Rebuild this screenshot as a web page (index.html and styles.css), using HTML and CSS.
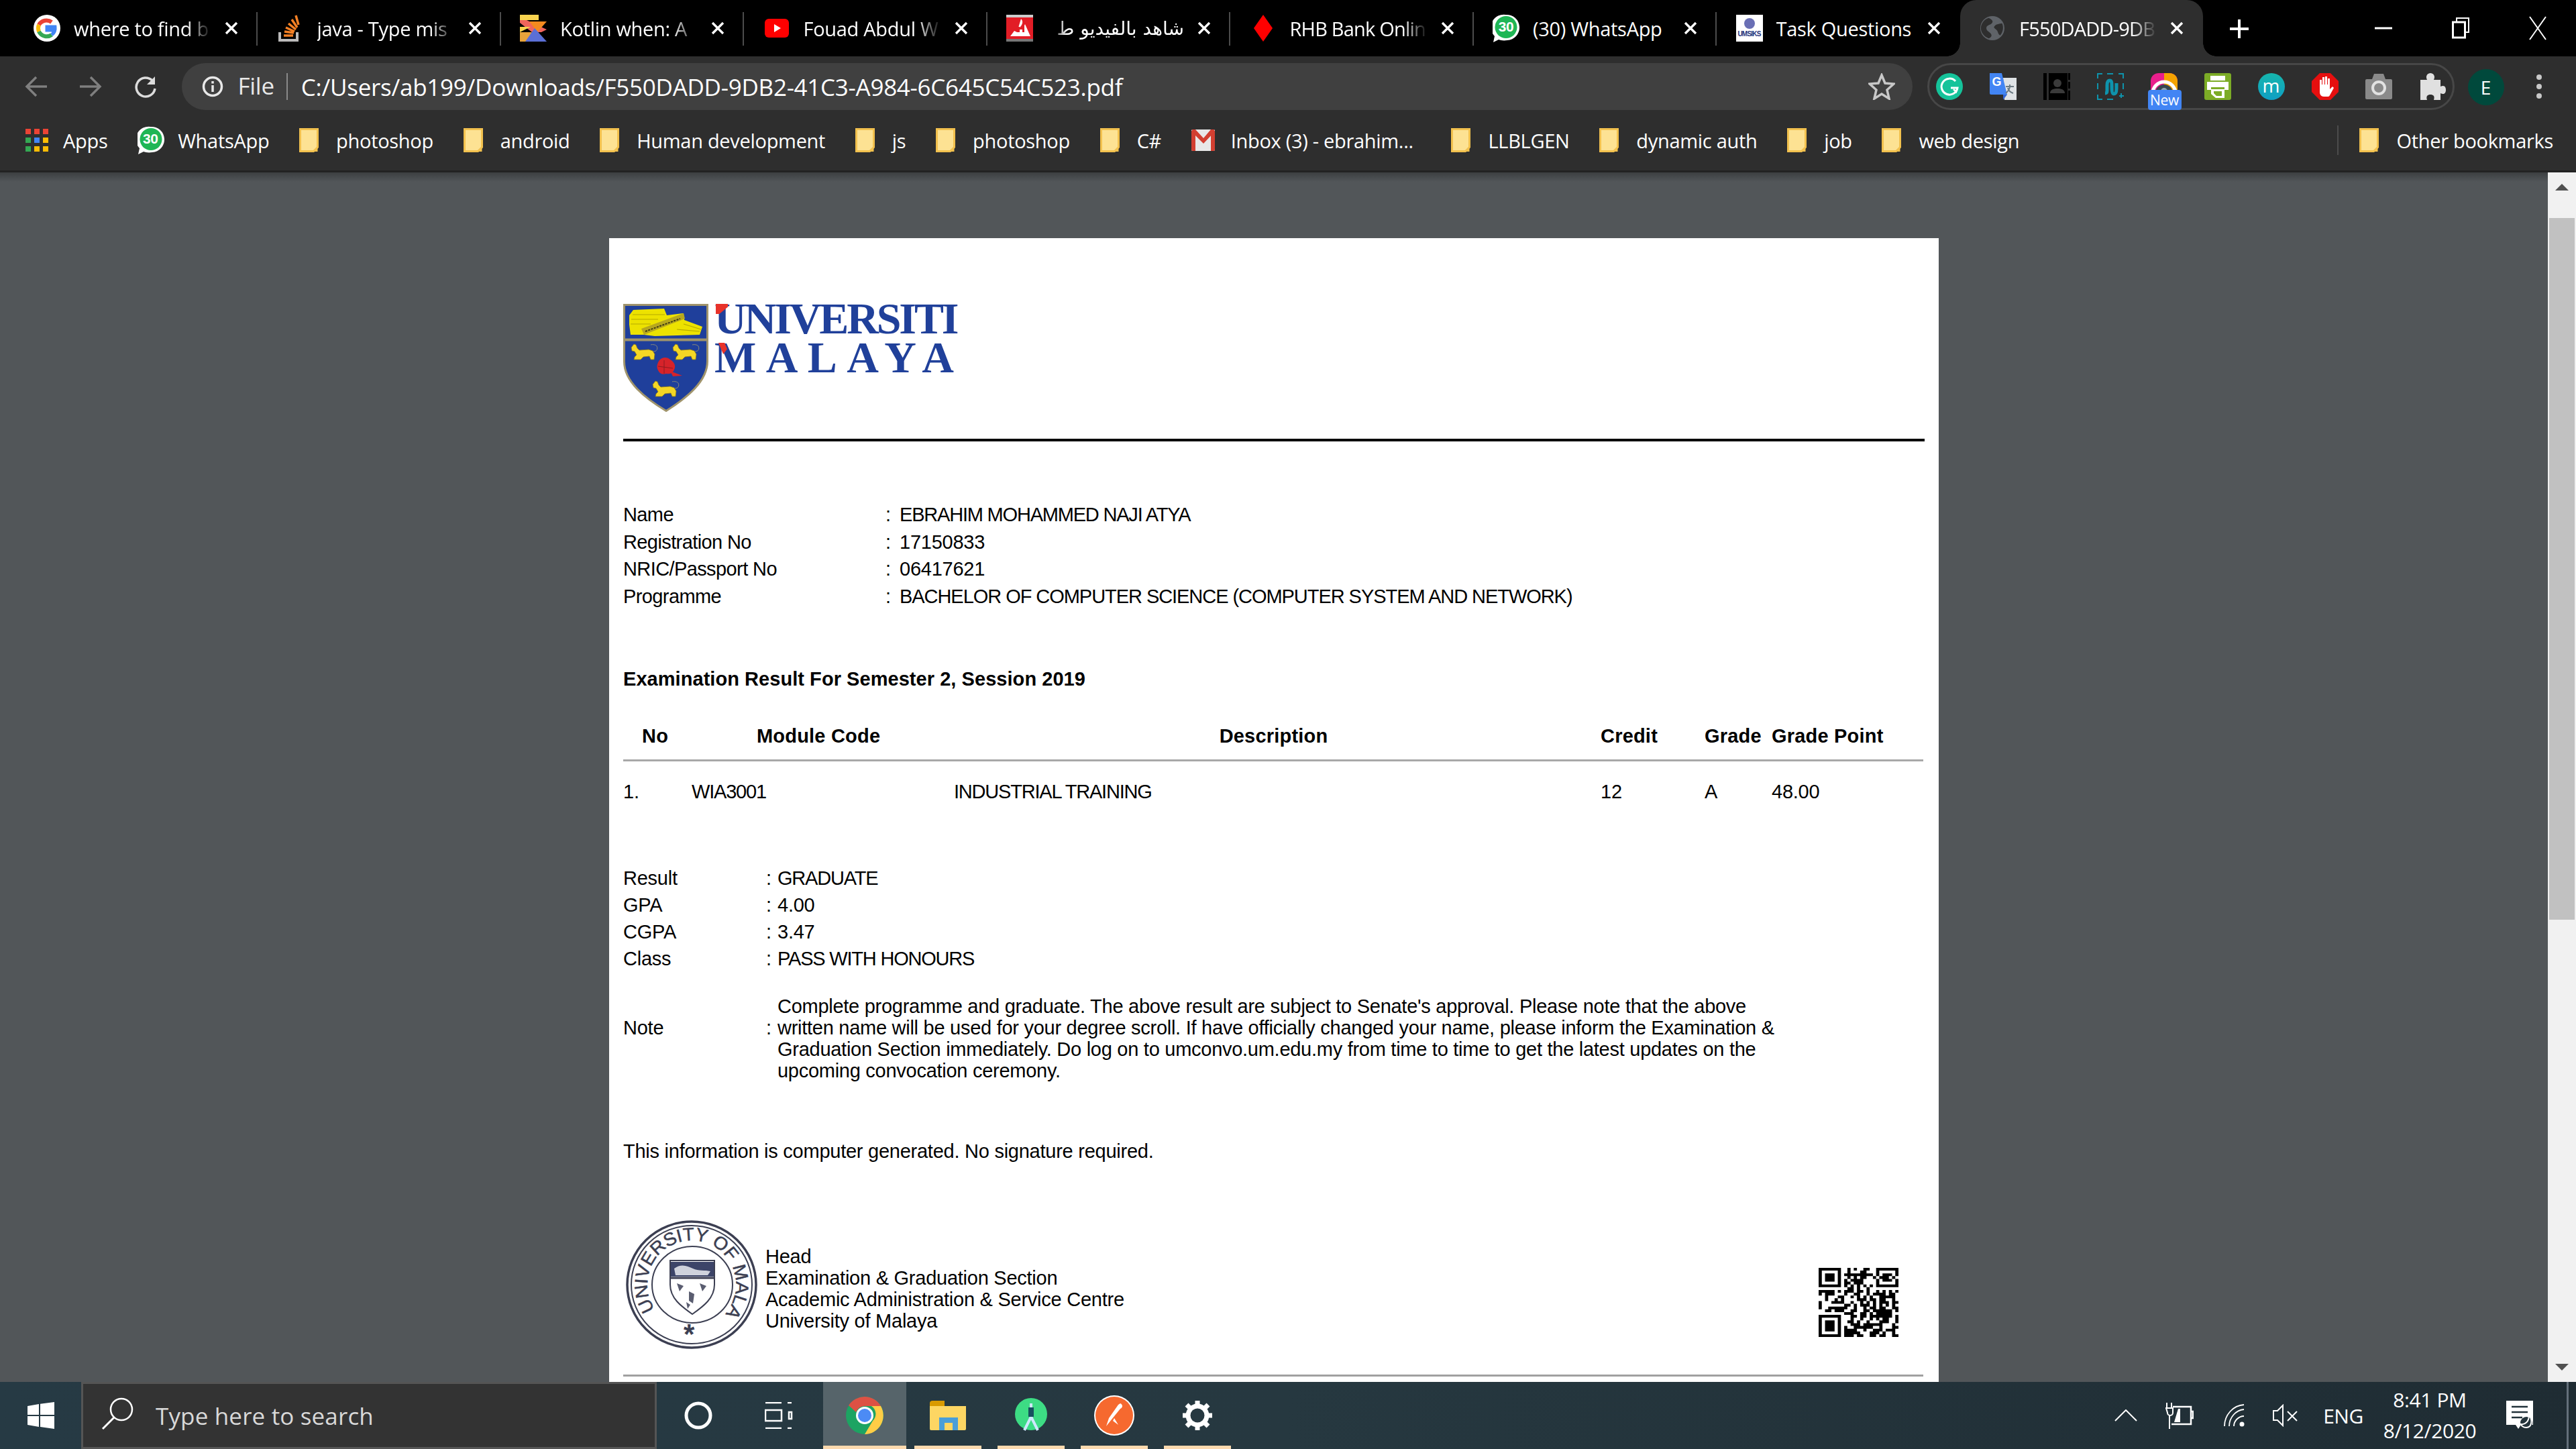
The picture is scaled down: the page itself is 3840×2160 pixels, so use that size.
FILE: index.html
```html
<!DOCTYPE html>
<html lang="en">
<head>
<meta charset="utf-8">
<title>F550DADD-9DB2-41C3-A984-6C645C54C523.pdf</title>
<link rel="stylesheet" href="styles.css">
</head>
<body>
<svg class="defs" width="0" height="0">
  <defs>
    <symbol id="x" viewBox="0 0 20 20"><path d="M2 2 18 18M18 2 2 18" stroke="#fff" stroke-width="3.4" fill="none"/></symbol>
    <symbol id="folder" viewBox="0 0 29 36"><path d="M1.5 1.500h26v27l-6 6h-20z" fill="#fde293" stroke="#f2c14e" stroke-width="3"/><path d="M27.500 27v8h-6z" fill="#f2c14e"/></symbol>
    <symbol id="wa" viewBox="0 0 40 44"><path d="M20 2a19 19 0 0 1 2 38c-6 1-10 0-13-1l-8 4 2-9A19 19 0 0 1 20 2z" fill="#fff"/><circle cx="20" cy="20.500" r="16.500" fill="#1fb655"/></symbol>
    <symbol id="tiger" viewBox="0 0 42 25"><path d="M1 6 5 1l3 1 2 5 3 3 14-1 6 2 3 5-1 8h-5l-2-5-9 1-4 4H5l1-4 3-3-3-5-4-1z" fill="#f4d625" stroke="#8a7a1c" stroke-width=".8"/><path d="M34 12c5 0 7-4 5-8-1-2-6-3-9-2" stroke="#8c8c7a" stroke-width="1" fill="none"/></symbol>
  </defs>
</svg>

<header class="tabstrip">
  <div class="tab sep">
    <svg class="favicon" viewBox="0 0 40 40"><circle cx="20" cy="20" r="20" fill="#fff"/><path d="M27 11a13 13 0 0 0-19 4" stroke="#ea4335" stroke-width="6" fill="none"/><path d="M8 15a13 13 0 0 0 0 10" stroke="#fbbc05" stroke-width="6" fill="none"/><path d="M8 25a13 13 0 0 0 19 5" stroke="#34a853" stroke-width="6" fill="none"/><path d="M27 30a13 13 0 0 0 5-12H20v5h7" stroke="#4285f4" stroke-width="5" fill="#4285f4"/></svg>
    <span class="tab-title">where to find b</span><svg class="close"><use href="#x"/></svg>
  </div>
  <div class="tab sep">
    <svg class="favicon" viewBox="0 0 40 40"><path d="M4 26v12h26V26" stroke="#bcbbbb" stroke-width="4" fill="none"/><path d="M10 31h14M11 25l14 2M13 19l13 6M17 13l11 9M22 7l8 12M28 1l4 14" stroke="#f48024" stroke-width="3.500" fill="none"/></svg>
    <span class="tab-title">java - Type mis</span><svg class="close"><use href="#x"/></svg>
  </div>
  <div class="tab sep">
    <svg class="favicon" viewBox="0 0 40 40"><path d="M0 0h28v8H0z" fill="#f8d34f"/><path d="M0 8h10l30 14-8 4H18L0 12z" fill="#f0655c"/><path d="M14 10h26L26 26z" fill="#f48a1f"/><path d="M0 18h16L0 26z" fill="#f8d34f"/><path d="M0 26h18l-8 14H0z" fill="#e8a33a"/><path d="M22 20l18 20H8z" fill="#5b6fd6"/></svg>
    <span class="tab-title">Kotlin when: A</span><svg class="close"><use href="#x"/></svg>
  </div>
  <div class="tab sep">
    <svg class="favicon" viewBox="0 0 40 40"><rect x="2" y="6" width="36" height="28" rx="6" fill="#f00"/><path d="M16 14l10 6-10 6z" fill="#fff"/></svg>
    <span class="tab-title">Fouad Abdul W</span><svg class="close"><use href="#x"/></svg>
  </div>
  <div class="tab sep">
    <svg class="favicon" viewBox="0 0 40 40"><rect width="40" height="40" fill="#e21d26"/><path d="M0 0h40v4H0z" fill="#ccc"/><path d="M0 36h40v4H0z" fill="#777"/><path d="M22 6c6 6-2 14-6 16h8l4-8 8 18H6l6-8 4 2z" fill="#fff"/><path d="M16 18h4v8h-4zM24 16h3v10h-3z" fill="#e21d26"/></svg>
    <span class="tab-title tab-rtl" dir="rtl" lang="ar">شاهد بالفيديو ط</span><svg class="close"><use href="#x"/></svg>
  </div>
  <div class="tab sep">
    <svg class="favicon" viewBox="0 0 40 40"><path d="M20 0l14 20-14 20L6 20z" fill="#f00"/></svg>
    <span class="tab-title tab-tight">RHB Bank Onlin</span><svg class="close"><use href="#x"/></svg>
  </div>
  <div class="tab sep">
    <span class="wa-badge"><svg class="wa-shape"><use href="#wa"/></svg><span class="wa-count">30</span></span>
    <span class="tab-title tab-solid">(30) WhatsApp</span><svg class="close"><use href="#x"/></svg>
  </div>
  <div class="tab">
    <span class="umsiks"><i class="umsiks-crest"></i>UMSIKS</span>
    <span class="tab-title tab-solid">Task Questions</span><svg class="close"><use href="#x"/></svg>
  </div>
  <div class="tab tab-active">
    <svg class="favicon globe" viewBox="0 0 40 40"><circle cx="20" cy="20" r="20" fill="#5f6368"/><path d="M14 3c6 3 8 6 5 9s-9 3-9 8 6 6 8 10-2 6-4 7c-8-3-13-10-13-17S6 5 14 3zM36 12c3 6 2 14-3 20-4-2-3-6-6-9s-6-4-3-7 8-3 12-4z" fill="#2e2e2e"/></svg>
    <span class="tab-title tab-tight">F550DADD-9DB</span><svg class="close"><use href="#x"/></svg>
  </div>
  <svg class="newtab" viewBox="0 0 30 30"><path d="M15 1v28M1 15h28" stroke="#fff" stroke-width="4"/></svg>
  <div class="winctl">
    <span class="wc"><svg width="26" height="4"><path d="M0 2h26" stroke="#fff" stroke-width="3"/></svg></span>
    <span class="wc"><svg width="26" height="32" viewBox="0 0 26 32"><path d="M7 6V1h18v21h-5" stroke="#fff" stroke-width="2" fill="none"/><path d="M1.500 7h18v23h-18z" stroke="#fff" stroke-width="3" fill="none"/></svg></span>
    <span class="wc"><svg width="26" height="36" viewBox="0 0 26 36"><path d="M1 1 25 35M25 1 1 35" stroke="#fff" stroke-width="2"/></svg></span>
  </div>
</header>

<nav class="toolbar">
  <span class="navbtn"><svg width="34" height="32" viewBox="0 0 34 32"><path d="M33 16H3M17 2 3 16l14 14" stroke="#7f7f7f" stroke-width="3.500" fill="none"/></svg></span>
  <span class="navbtn"><svg width="34" height="32" viewBox="0 0 34 32"><path d="M1 16h30M17 2l14 14-14 14" stroke="#7f7f7f" stroke-width="3.500" fill="none"/></svg></span>
  <span class="navbtn"><svg width="34" height="34" viewBox="0 0 34 34"><path d="M28 8a14 14 0 1 0 4 12" stroke="#dcdcdc" stroke-width="3.500" fill="none"/><path d="M32 2v12H20z" fill="#dcdcdc"/></svg></span>
  <div class="omnibox">
    <svg class="info" viewBox="0 0 32 32"><circle cx="16" cy="16" r="13.500" stroke="#e8e8e8" stroke-width="3.500" fill="none"/><path d="M16 14v10M16 8v3.500" stroke="#e8e8e8" stroke-width="3.500"/></svg>
    <span class="scheme">File</span>
    <span class="url">C:/Users/ab199/Downloads/F550DADD-9DB2-41C3-A984-6C645C54C523.pdf</span>
    <svg class="star" viewBox="0 0 40 40"><path d="M20 3l5 12 13 1-10 9 3 13-11-7-11 7 3-13L2 16l13-1z" stroke="#c8c8c8" stroke-width="3.500" fill="none"/></svg>
  </div>
  <div class="extensions">
    <svg class="ext" viewBox="0 0 40 40"><circle cx="20" cy="20" r="20" fill="#15c39a"/><path d="M29 12a12 12 0 1 0 3 10H22" stroke="#fff" stroke-width="3" fill="none"/><path d="M26 24l4 4 2-6" stroke="#fff" stroke-width="2.500" fill="none"/></svg>
    <span class="ext gtrans"><svg viewBox="0 0 40 40"><path d="M20 7h20v33H22z" fill="#dfe3e6"/><path d="M0 0h18l8 32H2a2 2 0 0 1-2-2z" fill="#4285f4"/><path d="M20 32h6l-6 8z" fill="#3367d6"/><path d="M24 20h12M30 17v3c0 5-4 8-6 10M27 22c1 4 5 7 8 8" stroke="#6d7b84" stroke-width="2" fill="none"/></svg><span class="gtrans-g">G</span></span>
    <svg class="ext" viewBox="0 0 40 40"><path d="M0 0h5v40H0zM8 0h28v40H8zM37 0h3v10h-3zM37 13h3v10h-3zM37 26h3v14h-3z" fill="#000"/><circle cx="21" cy="15" r="6" fill="#3a3a3a"/><path d="M10 30c0-6 6-7 11-7s11 1 11 7z" fill="#3a3a3a"/></svg>
    <svg class="ext" viewBox="0 0 40 40"><path d="M1 8V1h7M15 1h9M32 1h7v7M1 15v9M1 32v7h7M15 39h9M39 15v9M33 34h7M36 30v7" stroke="#0e93ac" stroke-width="2" fill="none"/><path d="M12 30c2 0 3-1 3-4v-8c0-4 1-7 4-7s3 4 3 8 0 12 3 12 4-4 4-8v-8" stroke="#0e93ac" stroke-width="5" fill="none"/></svg>
    <span class="ext camera"><svg viewBox="0 0 40 40"><path d="M0 40V12C0 4 6 0 12 0h16c7 0 12 5 12 12v28z" fill="#e91e8c"/><path d="M20 0h8c7 0 12 5 12 12v28H20z" fill="#f5a300"/><path d="M3 30a17 17 0 0 1 34 0" stroke="#fff" stroke-width="5" fill="none"/><path d="M7 30a13 13 0 0 1 26 0z" fill="#37474f"/><circle cx="20" cy="27" r="5" fill="#90a4ae"/></svg><span class="new-badge">New</span></span>
    <svg class="ext" viewBox="0 0 40 40"><rect width="40" height="40" rx="3" fill="#7cac26"/><path d="M9 4h22v7H9zM4 13h32v12h-6v-4H10v4H4zM10 24h20v13H17l-7-6z" fill="#fff"/><path d="M14 27h12v7H18l-4-4z" fill="#7cac26"/></svg>
    <span class="ext ext-m">m</span>
    <svg class="ext" viewBox="0 0 40 40"><path d="M12 0h16l12 12v16L28 40H12L0 28V12z" fill="#e60f0f"/><path d="M12 17v-7h3v7h1V6h3v11h1V5h3v12h1V8h3v16l4-4 2 2-6 11c-1 2-2 2-4 2h-5c-4 0-6-3-6-7z" fill="#fff"/></svg>
    <svg class="ext" viewBox="0 0 40 40"><path d="M2 9h8l3-8h14l3 8h8a2 2 0 0 1 2 2v26a2 2 0 0 1-2 2H2a2 2 0 0 1-2-2V11a2 2 0 0 1 2-2z" fill="#8a8a8a"/><circle cx="20" cy="22" r="9" fill="none" stroke="#e2e2e2" stroke-width="4"/></svg>
    <svg class="ext" viewBox="0 0 40 40"><path d="M2 10h10c-3-6 1-10 5-10s8 4 5 10h10v10c6-3 8 1 8 5s-2 8-8 5v10H22c2-6-1-8-5-8s-7 2-5 8H2z" fill="#e0e0e0"/></svg>
  </div>
  <span class="avatar">E</span>
  <svg class="menu-dots" viewBox="0 0 12 40"><circle cx="6" cy="6" r="4" fill="#c8c8c8"/><circle cx="6" cy="20" r="4" fill="#c8c8c8"/><circle cx="6" cy="34" r="4" fill="#c8c8c8"/></svg>
</nav>

<nav class="bookmarks">
  <span class="bm"><svg class="bm-apps" viewBox="0 0 34 34"><path d="M0 0h8v8H0z" fill="#ea4335"/><path d="M13 0h8v8h-8zM26 0h8v8h-8z" fill="#ea4335"/><path d="M0 13h8v8H0z" fill="#34a853"/><path d="M13 13h8v8h-8z" fill="#4285f4"/><path d="M26 13h8v8h-8z" fill="#fbbc05"/><path d="M0 26h8v8H0z" fill="#34a853"/><path d="M13 26h8v8h-8zM26 26h8v8h-8z" fill="#fbbc05"/></svg>Apps</span>
  <span class="bm bm-wa"><span class="wa-badge"><svg class="wa-shape"><use href="#wa"/></svg><span class="wa-count">30</span></span>WhatsApp</span>
  <span class="bm"><svg class="folder"><use href="#folder"/></svg>photoshop</span>
  <span class="bm"><svg class="folder"><use href="#folder"/></svg>android</span>
  <span class="bm"><svg class="folder"><use href="#folder"/></svg>Human development</span>
  <span class="bm"><svg class="folder"><use href="#folder"/></svg>js</span>
  <span class="bm"><svg class="folder"><use href="#folder"/></svg>photoshop</span>
  <span class="bm"><svg class="folder"><use href="#folder"/></svg>C#</span>
  <span class="bm bm-inbox"><svg class="bm-gmail" viewBox="0 0 35 32"><rect width="35" height="32" rx="2" fill="#e8e8e8"/><path d="M0 2h6v30H2a2 2 0 0 1-2-2zM29 2h6v28a2 2 0 0 1-2 2h-4z" fill="#d23f31"/><path d="M1 0h5l12 13L29 0h5v4L18 21 1 4z" fill="#d23f31"/></svg>Inbox (3) - ebrahim...</span>
  <span class="bm"><svg class="folder"><use href="#folder"/></svg>LLBLGEN</span>
  <span class="bm"><svg class="folder"><use href="#folder"/></svg>dynamic auth</span>
  <span class="bm"><svg class="folder"><use href="#folder"/></svg>job</span>
  <span class="bm"><svg class="folder"><use href="#folder"/></svg>web design</span>
  <span class="bm-sep"></span>
  <span class="bm"><svg class="folder"><use href="#folder"/></svg>Other bookmarks</span>
</nav>

<main class="viewer">
  <div class="stage">
    <article class="page">
      <div class="letterhead">
        <svg class="shield" viewBox="0 0 127 161">
          <path d="M1.500 1.500h124v84c0 30-30 54-61.500 74C32 140 1.500 116 1.500 86z" fill="#1f3f9b" stroke="#a0946c" stroke-width="3"/>
          <path d="M1 53.500h125" stroke="#a0946c" stroke-width="4"/>
          <path d="M9 17l6-8 46-2 4 10 25-3 1 10 27 10-4 12-67 2-16-2-20 0-2-15z" fill="#ede200"/>
          <path d="M14 16h48M12 23h40M11 30h30M90 30l26 8M80 38l34 3" stroke="#b5a900" stroke-width="1.200"/>
          <path d="M27 37 90 14l2 8-61 24z" fill="#b7a81e"/>
          <path d="M33 41l52-19" stroke="#3d3a12" stroke-width="2" stroke-dasharray="3 1.500"/>
          <use href="#tiger" x="11" y="59" width="42" height="25"/>
          <use href="#tiger" x="73" y="59" width="42" height="25"/>
          <use href="#tiger" x="43" y="114" width="42" height="25"/>
          <path d="M54 84c4-5 12-5 16-1 6 3 9 10 6 15-2 6-8 7-12 6-5 2-10 0-12-5-3-5-1-11 2-15z" fill="#d6232a"/>
          <path d="M61 84v20M52 93l22 3" stroke="#8f1a20" stroke-width="1"/>
          <path d="M70 100l18 7-14 1z" fill="#d6232a"/>
        </svg>
        <div class="wordmark">
          <span class="wm-line wm-top">UNIVERSITI</span>
          <span class="wm-line wm-bottom">MALAYA</span>
        </div>
      </div>
      <hr class="rule-black">

      <dl class="student">
        <dt>Name</dt><dd>:</dd><dd class="caps">EBRAHIM MOHAMMED NAJI ATYA</dd>
        <dt>Registration No</dt><dd>:</dd><dd>17150833</dd>
        <dt>NRIC/Passport No</dt><dd>:</dd><dd>06417621</dd>
        <dt>Programme</dt><dd>:</dd><dd class="caps-long">BACHELOR OF COMPUTER SCIENCE (COMPUTER SYSTEM AND NETWORK)</dd>
      </dl>

      <h2 class="exam-title">Examination Result For Semester 2, Session 2019</h2>

      <div class="results-head">
        <span class="rh-no">No</span>
        <span class="rh-code">Module Code</span>
        <span class="rh-desc">Description</span>
        <span>Credit</span>
        <span>Grade</span>
        <span>Grade Point</span>
      </div>
      <div class="results-row">
        <span>1.</span><span class="caps">WIA3001</span><span class="caps">INDUSTRIAL TRAINING</span><span>12</span><span>A</span><span>48.00</span>
      </div>

      <dl class="summary">
        <dt>Result</dt><dd>: </dd><dd class="caps">GRADUATE</dd>
        <dt>GPA</dt><dd>: </dd><dd>4.00</dd>
        <dt>CGPA</dt><dd>: </dd><dd>3.47</dd>
        <dt>Class</dt><dd>: </dd><dd class="caps">PASS WITH HONOURS</dd>
      </dl>

      <div class="note">
        <span class="note-label">Note</span>
        <span class="note-label">:</span>
        <p>Complete programme and graduate. The above result are subject to Senate's approval. Please note that the above<br>written name will be used for your degree scroll. If have officially changed your name, please inform the Examination &amp;<br>Graduation Section immediately. Do log on to umconvo.um.edu.my from time to time to get the latest updates on the<br>upcoming convocation ceremony.</p>
      </div>

      <p class="generated">This information is computer generated. No signature required.</p>

      <div class="signoff">
        <svg class="seal" viewBox="0 0 196 192">
          <defs><path id="sealArc" d="M43.300 132.900A66 66 0 1 1 150 136.600"/></defs>
          <ellipse cx="98" cy="96" rx="96" ry="94" fill="none" stroke="#3c3f52" stroke-width="3.500"/>
          <ellipse cx="98" cy="96" rx="90" ry="88" fill="none" stroke="#3c3f52" stroke-width="2"/>
          <ellipse cx="99" cy="96" rx="60" ry="57" fill="none" stroke="#3c3f52" stroke-width="2"/>
          <text class="seal-text"><textPath href="#sealArc" textLength="326" lengthAdjust="spacingAndGlyphs">UNIVERSITY OF MALAYA</textPath></text>
          <path d="M66 60h66v36c0 20-16 32-33 44-17-12-33-24-33-44z" fill="#fff" stroke="#3c3f52" stroke-width="2"/>
          <path d="M67 62h64v22H67z" fill="#3c4468"/>
          <path d="M72 72c10-8 20-4 28 0s18 2 26 4l-4 6H74z" fill="#cfd2dc"/>
          <path d="M66 86h66" stroke="#3c3f52" stroke-width="3"/>
          <path d="M76 94l10 4-6 8zM110 94l10 4-6 8zM94 106l8 4-2 14-6-4zM90 122l6 4-4 6z" fill="#5a5d70"/>
          <text class="seal-star" x="94" y="184">*</text>
        </svg>
        <address class="signatory">Head<br>Examination &amp; Graduation Section<br>Academic Administration &amp; Service Centre<br>University of Malaya</address>
        <svg class="qr" viewBox="0 0 25 25" preserveAspectRatio="none">
          <path d="M0 .5h7m2 0h1m1 0h1m2 0h2m2 0h7
          M0 1.500h1m5 0h1m2 0h1m3 0h2m3 0h1m5 0h1
          M0 2.500h1m1 0h3m1 0h1m1 0h9m1 0h1m1 0h3m1 0h1
          M0 3.500h1m1 0h3m1 0h1m2 0h1m1 0h1m1 0h2m2 0h1m1 0h3m1 0h1
          M0 4.500h1m1 0h3m1 0h1m1 0h1m1 0h4m4 0h1m1 0h3m1 0h1
          M0 5.500h1m5 0h1m1 0h2m1 0h3m4 0h1m5 0h1
          M0 6.500h7m1 0h1m1 0h1m1 0h1m1 0h1m1 0h1m1 0h7
          M9 7.500h2m1 0h1m2 0h1
          M0 8.500h5m1 0h1m1 0h3m1 0h2m1 0h1m2 0h1m1 0h1m1 0h1m1 0h1
          M0 9.500h1m1 0h3m3 0h1m2 0h2m2 0h1m1 0h4m1 0h2
          M2 10.500h1m3 0h2m2 0h1m1 0h1m1 0h1m1 0h1m2 0h5
          M2 11.500h1m2 0h1m1 0h1m4 0h3m1 0h2m1 0h2m2 0h1
          M0 12.500h1m3 0h4m2 0h1m2 0h1m1 0h1m1 0h1m1 0h3m1 0h2
          M0 13.500h1m7 0h2m1 0h1m1 0h3m1 0h1m1 0h1m1 0h1m1 0h1
          M0 14.500h1m2 0h6m2 0h1m2 0h1m1 0h2m1 0h2m2 0h2
          M2 15.500h2m1 0h3m2 0h2m2 0h2m1 0h6m1 0h1
          M8 16.500h3m2 0h2m1 0h1m1 0h5
          M0 17.500h7m3 0h2m1 0h2m1 0h7m1 0h1
          M0 18.500h1m5 0h1m3 0h1m2 0h1m2 0h1m1 0h1m1 0h2m2 0h1
          M0 19.500h1m1 0h3m1 0h1m2 0h2m1 0h1m2 0h1m3 0h3m2 0h1
          M0 20.500h1m1 0h3m1 0h1m3 0h3m1 0h6m3 0h1
          M0 21.500h1m1 0h3m1 0h1m1 0h1m2 0h6m2 0h1m3 0h2
          M0 22.500h1m1 0h3m1 0h1m1 0h4m2 0h1m2 0h3m1 0h3
          M0 23.500h1m5 0h1m1 0h5m3 0h3m1 0h1m2 0h1
          M0 24.500h7m1 0h3m1 0h2m2 0h2m1 0h2m2 0h2" stroke="#000" stroke-width="1" fill="none"/>
        </svg>
      </div>
      <hr class="rule-grey">
    </article>
  </div>
  <aside class="scrollbar">
    <span class="arrow-up"></span>
    <span class="thumb"></span>
    <span class="arrow-down"></span>
  </aside>
</main>

<footer class="taskbar">
  <span class="start"><svg width="40" height="40" viewBox="0 0 40 40"><path d="M0 6l17-3v16H0zM19 2.700 40 0v19H19zM0 21h17v16L0 34zM19 21h21v19l-21-3z" fill="#fff"/></svg></span>
  <div class="search">
    <svg class="search-icon" viewBox="0 0 50 50"><circle cx="31" cy="19" r="16" stroke="#fff" stroke-width="2.500" fill="none"/><path d="M20 31 3 48" stroke="#fff" stroke-width="3"/></svg>
    <span class="search-text">Type here to search</span>
  </div>
  <span class="tb"><svg width="46" height="46" viewBox="0 0 46 46"><circle cx="23" cy="23" r="18" stroke="#fff" stroke-width="5" fill="none"/></svg></span>
  <span class="tb tb-view"><svg width="42" height="40" viewBox="0 0 42 40"><path d="M1 1h24M1 39h24M1 12h24v16H1z" stroke="#fff" stroke-width="2.500" fill="none"/><path d="M34 1h6M34 39h6M36 15h4v10h-4z" stroke="#fff" stroke-width="2.500" fill="none"/></svg></span>
  <span class="tb tb-active tb-open"><svg width="56" height="56" viewBox="0 0 56 56"><circle cx="28" cy="28" r="28" fill="#1da462"/><path d="M28 0a28 28 0 0 1 24 14H28a14 14 0 0 0-13 9L4 13A28 28 0 0 1 28 0z" fill="#dd5144"/><path d="M52 14a28 28 0 0 1-24 42l12-20a14 14 0 0 0-2-22z" fill="#ffcd46"/><circle cx="28" cy="28" r="13" fill="#fff"/><circle cx="28" cy="28" r="10" fill="#4c8bf5"/></svg></span>
  <span class="tb tb-open tb-stack"><svg width="54" height="46" viewBox="0 0 54 46"><path d="M0 5a4 4 0 0 1 4-4h18v12H0z" fill="#d99a00"/><path d="M0 9h54v34a2 2 0 0 1-2 2H2a2 2 0 0 1-2-2z" fill="#fdd663"/><path d="M14 26h28v19h-8v-11H22v11h-8z" fill="#4a9ed8"/></svg></span>
  <span class="tb tb-open"><svg width="48" height="52" viewBox="0 0 48 52"><ellipse cx="24" cy="24" rx="24" ry="24" fill="#3ddc84"/><path d="M24 8v20M14 48l10-20 10 20" stroke="#cfe8ff" stroke-width="4" fill="none"/><path d="M20 14h8v14h-8z" fill="#17505f"/></svg></span>
  <span class="tb tb-open"><svg width="60" height="60" viewBox="0 0 60 60"><circle cx="30" cy="30" r="30" fill="#fff"/><circle cx="30" cy="30" r="28" fill="#f6692f"/><path d="M39 12c4 2 4 6 0 8L26 36l-8 10 4-12 14-20zM28 38l8 6-6-10z" fill="#fff"/></svg></span>
  <span class="tb tb-open"><svg width="46" height="46" viewBox="0 0 46 46"><circle cx="23" cy="23" r="14" stroke="#fff" stroke-width="7" fill="none"/><path d="M23 1v9M23 36v9M1 23h9M36 23h9M7 7l7 7M32 32l7 7M39 7l-7 7M14 32l-7 7" stroke="#fff" stroke-width="7"/></svg></span>
  <div class="tray">
    <span class="tr tr-chev"><svg width="34" height="18" viewBox="0 0 34 18"><path d="M1 17 17 1l16 16" stroke="#fff" stroke-width="2" fill="none"/></svg></span>
    <span class="tr tr-bat"><svg width="42" height="40" viewBox="0 0 42 40"><path d="M2 1v8M9 1v8M1 9h10v7a4 4 0 0 1-8 0zM6 20v20" stroke="#fff" stroke-width="2" fill="none"/><path d="M11 7h27v26H9M38 14h3v10h-3" stroke="#fff" stroke-width="2.500" fill="none"/><path d="M13 30l6-20h3v20z" fill="#fff"/></svg></span>
    <span class="tr tr-wifi"><svg width="32" height="34" viewBox="0 0 32 34"><path d="M1 33C1 16 14 2 30 1M8 33C8 20 18 9 30 8M15 33c0-8 7-15 15-15" stroke="#fff" stroke-width="1.800" fill="none"/><circle cx="27" cy="30" r="3.500" fill="#fff"/></svg></span>
    <span class="tr tr-spk"><svg width="38" height="34" viewBox="0 0 38 34"><path d="M1 10h6l8-8v30l-8-8H1z" stroke="#fff" stroke-width="2" fill="none"/><path d="M22 11l14 14M36 11 22 25" stroke="#fff" stroke-width="2"/></svg></span>
    <span class="tr tr-lang">ENG</span>
    <span class="tr tr-clock"><span>8:41 PM</span><span>8/12/2020</span></span>
    <span class="tr tr-note"><svg width="42" height="44" viewBox="0 0 42 44"><path d="M0 0h40v36H22l-4 6-4-6H0z" fill="#fff"/><path d="M8 9h24M8 17h24M8 25h16" stroke="#22323a" stroke-width="2.500"/><circle cx="30" cy="33" r="9" fill="#22323a"/><path d="M34 22c6 6 4 18-4 18-5 0-8-3-8-5 6 1 12-4 12-13z" fill="#22323a" stroke="#fff" stroke-width="2"/></svg></span>
    <span class="tr-edge"></span>
  </div>
</footer>
</body>
</html>
```
FILE: styles.css
```css
* { box-sizing: border-box; }
html, body { margin: 0; padding: 0; }
body {
  width: 3840px;
  height: 2160px;
  overflow: hidden;
  display: flex;
  flex-direction: column;
  background: #525659;
  font-family: "Open Sans", "Noto Sans", "DejaVu Sans", sans-serif;
}
.defs { position: absolute; }

/* tab strip */
.tabstrip {
  height: 84px;
  flex: none;
  background: #000;
  display: flex;
  align-items: stretch;
  padding-left: 21.5px;
  color: #fff;
}
.tab {
  position: relative;
  width: 362.5px;
  flex: none;
  display: flex;
  align-items: center;
  padding-left: 28.5px;
  font-size: 29px;
  letter-spacing: -.3px;
}
.tab.sep::after {
  content: "";
  position: absolute;
  right: 0;
  top: 18px;
  bottom: 16px;
  width: 2px;
  background: #4c4c4c;
}
.tab-active {
  background: #2e2e2e;
  border-radius: 24px 24px 0 0;
}
.tab-active::before, .tab-active::after {
  content: "";
  position: absolute;
  bottom: 0;
  width: 20px;
  height: 20px;
}
.tab-active::before { left: -20px; background: radial-gradient(circle at 0 0, #000 19.5px, #2e2e2e 20px); }
.tab-active::after { right: -20px; background: radial-gradient(circle at 100% 0, #000 19.5px, #2e2e2e 20px); }
.favicon { width: 40px; height: 40px; flex: none; }
.globe { width: 36px; height: 44px; margin-left: 2px; margin-right: 2px; }
.tab-title {
  width: 205px;
  margin-left: 20px;
  margin-right: 20px;
  flex: none;
  white-space: nowrap;
  overflow: hidden;
  -webkit-mask-image: linear-gradient(90deg, #000 82%, transparent 100%);
  mask-image: linear-gradient(90deg, #000 82%, transparent 100%);
}
.tab-tight { letter-spacing: -.8px; }
.tab-solid { -webkit-mask-image: none; mask-image: none; }
.tab-rtl {
  -webkit-mask-image: linear-gradient(270deg, #000 85%, transparent 100%);
  mask-image: linear-gradient(270deg, #000 85%, transparent 100%);
  font-family: "DejaVu Sans", sans-serif;
  font-size: 28px;
  letter-spacing: 0;
}
.close { width: 20px; height: 26px; flex: none; }
.wa-badge { position: relative; width: 40px; height: 44px; flex: none; display: inline-block; }
.wa-shape { width: 40px; height: 44px; display: block; }
.wa-count {
  position: absolute;
  left: 0;
  right: 0;
  top: 7px;
  text-align: center;
  color: #fff;
  font: 700 21px/26px "Liberation Sans", sans-serif;
  letter-spacing: -.5px;
}
.umsiks {
  width: 40px;
  height: 40px;
  flex: none;
  background: #fff;
  color: #24327a;
  font: 700 10px/12px "Liberation Sans", sans-serif;
  letter-spacing: -.8px;
  display: flex;
  flex-direction: column;
  align-items: center;
  justify-content: flex-end;
  padding-bottom: 5px;
  overflow: hidden;
}
.umsiks-crest { width: 16px; height: 16px; border-radius: 50%; background: #6a6fb5; margin-bottom: 2px; }
.newtab { width: 30px; height: 30px; flex: none; align-self: center; margin: 2px 0 0 39px; }
.winctl { margin-left: auto; display: flex; align-items: center; flex: none; }
.wc { width: 115px; display: flex; justify-content: center; align-items: center; }

/* toolbar */
.toolbar {
  height: 80px;
  flex: none;
  background: #2e2e2e;
  display: flex;
  align-items: flex-end;
  padding-left: 13.5px;
}
.navbtn { width: 81px; height: 70px; display: flex; align-items: center; justify-content: center; flex: none; }
.omnibox {
  margin-left: 14px;
  width: 2580px;
  height: 70px;
  flex: none;
  border-radius: 35px;
  background: #404040;
  display: flex;
  align-items: center;
  padding: 0 26px 0 30px;
  color: #fff;
  font-size: 35px;
  letter-spacing: -.28px;
}
.info { width: 32px; height: 32px; flex: none; }
.scheme {
  margin-left: 22px;
  padding-right: 18px;
  height: 40px;
  line-height: 38px;
  border-right: 2px solid #8a8a8a;
  color: #e8e8e8;
  flex: none;
}
.url { margin-left: 20px; flex: 1; white-space: nowrap; }
.star { width: 40px; height: 40px; flex: none; }
.extensions {
  margin-left: 22px;
  width: 786px;
  height: 70px;
  flex: none;
  border: 3px solid #474747;
  border-radius: 35px;
  display: flex;
  align-items: center;
  gap: 40px;
  padding-left: 10px;
}
.ext { width: 40px; height: 40px; flex: none; position: relative; display: block; }
.ext svg { width: 40px; height: 40px; display: block; }
.gtrans-g {
  position: absolute;
  left: 4px;
  top: 3px;
  font: 700 18px/20px "Liberation Sans", sans-serif;
  color: #fff;
}
.new-badge {
  position: absolute;
  left: -4px;
  right: -6px;
  top: 25px;
  height: 30px;
  background: #4285f4;
  border-radius: 4px;
  color: #fff;
  font-size: 21px;
  line-height: 30px;
  text-align: center;
  letter-spacing: -.3px;
}
.ext-m {
  border-radius: 50%;
  background: linear-gradient(#16b5ac, #0f9fc4);
  color: #fff;
  font-size: 28px;
  line-height: 36px;
  text-align: center;
}
.avatar {
  margin-left: 20px;
  margin-bottom: 7px;
  width: 54px;
  height: 54px;
  flex: none;
  border-radius: 50%;
  background: #00493c;
  color: #fff;
  font-size: 28px;
  line-height: 54px;
  text-align: center;
}
.menu-dots { width: 12px; height: 40px; margin: 0 0 15px 46px; flex: none; }

/* bookmarks */
.bookmarks {
  height: 90px;
  flex: none;
  background: #2e2e2e;
  display: flex;
  align-items: center;
  padding: 0 34px 0 38px;
  gap: 44.7px;
  color: #fff;
  font-size: 29px;
  letter-spacing: -.3px;
}
.bm { display: flex; align-items: center; gap: 26px; white-space: nowrap; flex: none; }
.bm-inbox { margin-right: 12px; }
.folder { width: 29px; height: 36px; flex: none; }
.bm-apps { width: 34px; height: 34px; flex: none; margin-right: -4px; }
.bm-gmail { width: 35px; height: 32px; flex: none; margin-right: -2px; }
.bm-wa { gap: 22px; }
.bm-wa .wa-badge { width: 38px; }
.bm-sep { width: 2px; height: 44px; background: #4c4c4c; margin-left: auto; margin-right: -13px; flex: none; }

/* viewer */
.viewer {
  height: 1806px;
  flex: none;
  display: flex;
  background: #525659;
  border-top: 3px solid #222;
  overflow: hidden;
  position: relative;
}
.viewer::before {
  content: "";
  position: absolute;
  inset: 0 42px auto 0;
  height: 14px;
  background: linear-gradient(#3c3f41, transparent);
}
.stage { flex: 1; padding-top: 98px; display: flex; justify-content: center; min-width: 0; }
.page {
  width: 1982px;
  height: 1900px;
  flex: none;
  background: #fff;
  padding: 98px 22px 0 21px;
  color: #000;
  font-family: "Liberation Sans", Arial, sans-serif;
  font-size: 29px;
  letter-spacing: -.25px;
  line-height: 40px;
}
.caps { letter-spacing: -1.2px; }
.caps-long { letter-spacing: -1.05px; }
.letterhead { display: flex; gap: 9px; height: 163px; }
.shield { width: 127px; height: 161px; flex: none; }
.wordmark { display: flex; flex-direction: column; gap: 14px; font-family: "Liberation Serif", serif; font-weight: 700; color: #20409a; width: 358px; }
.wm-line { display: block; height: 44px; line-height: 44px; font-size: 66px; white-space: nowrap; position: relative; }
.wm-line::before {
  content: "";
  position: absolute;
  background: #e8322a;
}
.wm-top { letter-spacing: -3.1px; }
.wm-top::before { left: 2px; top: 0; width: 18px; height: 15px; clip-path: polygon(0 0, 100% 0, 100% 30%, 30% 100%, 0 100%); }
.wm-bottom { letter-spacing: 14.4px; }
.wm-bottom::before { left: 6px; top: 0; width: 13px; height: 17px; clip-path: polygon(0 0, 70% 0, 100% 55%, 55% 100%); }
.rule-black { height: 4px; margin: 38px 0 0; border: 0; background: #000; width: 1940px; }

.student {
  margin: 89px 0 0;
  display: grid;
  grid-template-columns: 391px 21px 1fr;
  grid-auto-rows: 40.500px;
}
.student dt, .student dd, .summary dt, .summary dd { margin: 0; white-space: nowrap; }
.student dt { letter-spacing: -.6px; }
.exam-title { margin: 83px 0 0; font-size: 29px; font-weight: 700; line-height: 40px; letter-spacing: .05px; }

.results-head, .results-row {
  display: grid;
  grid-template-columns: 102px 391px 964px 155px 100px 1fr;
  width: 1938px;
  white-space: nowrap;
}
.results-head {
  margin-top: 44px;
  height: 59px;
  font-weight: 700;
  font-size: 29px;
  letter-spacing: .2px;
  border-bottom: 3px solid #a8a8a8;
  line-height: 42px;
}
.rh-no { padding-left: 28px; }
.rh-code { padding-left: 97px; }
.rh-desc { text-align: center; padding-right: 11px; }
.results-row { margin-top: 25px; }

.summary {
  margin: 89px 0 0;
  display: grid;
  grid-template-columns: 213px 17px 1fr;
  grid-auto-rows: 40px;
}
.note {
  margin-top: 35px;
  display: grid;
  grid-template-columns: 213px 17px 1fr;
  line-height: 32px;
}
.note-label { padding-top: 32px; }
.note p { margin: 0; white-space: nowrap; letter-spacing: -.27px; }
.generated { margin: 84px 0 0; }

.signoff { display: flex; margin-top: 83px; height: 220px; position: relative; }
.seal { width: 196px; height: 192px; flex: none; margin-left: 4px; }
.seal-text { font: 400 27px "Liberation Sans", sans-serif; fill: #3c3f52; stroke: #3c3f52; stroke-width: .5px; }
.seal-star { font: 700 42px "Liberation Sans", sans-serif; fill: #3c3f52; text-anchor: middle; }
.signatory { margin: 38px 0 0 12px; font-style: normal; line-height: 32px; white-space: nowrap; }
.qr { width: 119px; height: 103px; flex: none; margin: 71px 38px 0 auto; }
.rule-grey { margin: 10px 0 0; height: 3px; border: 0; background: #a0a0a0; width: 1938px; }

/* scrollbar */
.scrollbar {
  width: 42px;
  flex: none;
  background: #f1f1f1;
  position: relative;
  display: flex;
  flex-direction: column;
  align-items: center;
}
.arrow-up {
  margin-top: 17px;
  border-left: 10px solid transparent;
  border-right: 10px solid transparent;
  border-bottom: 10px solid #505050;
  flex: none;
}
.thumb { margin-top: 41px; width: 38px; height: 1046px; background: #c1c1c1; flex: none; }
.arrow-down {
  margin-top: auto;
  margin-bottom: 17px;
  border-left: 10px solid transparent;
  border-right: 10px solid transparent;
  border-top: 10px solid #505050;
  flex: none;
}

/* taskbar */
.taskbar {
  height: 100px;
  flex: none;
  display: flex;
  align-items: stretch;
  background: linear-gradient(90deg, #263a44, #263840 50%, #1f2c33);
  color: #fff;
}
.start { width: 121px; display: flex; align-items: center; justify-content: center; flex: none; }
.search {
  width: 858px;
  flex: none;
  background: #333;
  border: 3px solid #555;
  display: flex;
  align-items: center;
  padding-left: 26px;
  gap: 32px;
}
.search-icon { width: 50px; height: 50px; flex: none; margin-top: -6px; }
.search-text { font-size: 35px; color: #d8d8d8; letter-spacing: .15px; }
.tb { width: 124px; flex: none; display: flex; align-items: center; justify-content: center; position: relative; }
.tb-view { padding-right: 8px; }
.tb-active { background: #56646a; }
.tb-open::after {
  content: "";
  position: absolute;
  left: 12px;
  right: 12px;
  bottom: 0;
  height: 5px;
  background: #fcd9ae;
}
.tb-active::after { left: 0; right: 0; }
.tray { margin-left: auto; display: flex; align-items: stretch; flex: none; padding-right: 11px; }
.tr { display: flex; align-items: center; justify-content: center; flex: none; }
.tr-chev { width: 78px; }
.tr-bat { width: 81px; }
.tr-wifi { width: 83px; }
.tr-spk { width: 70px; }
.tr-lang { width: 102px; font-size: 30px; letter-spacing: -.5px; }
.tr-clock { width: 156px; flex-direction: column; font-size: 30px; line-height: 46px; letter-spacing: -.4px; }
.tr-note { width: 114px; }
.tr-edge { width: 3px; background: #64707a; margin-left: 12px; flex: none; }
```
